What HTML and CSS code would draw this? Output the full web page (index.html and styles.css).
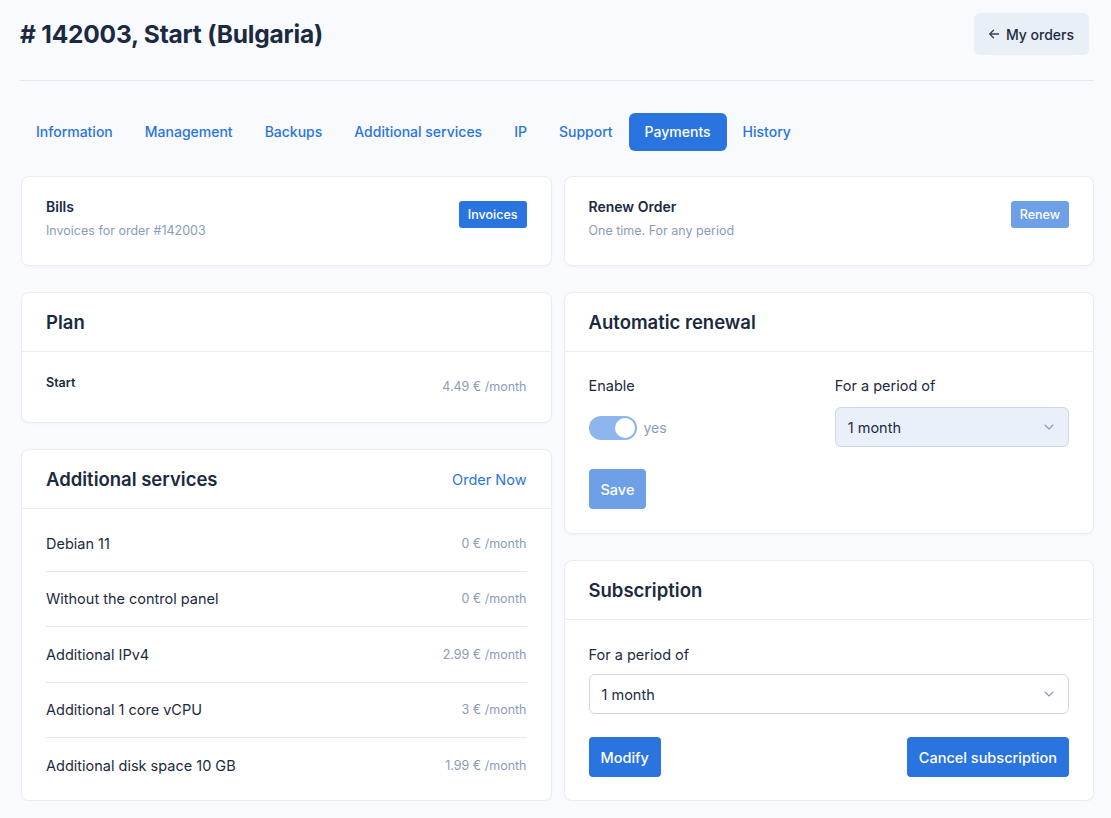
FILE: index.html
```html
<!DOCTYPE html>
<html lang="en">
<head>
<meta charset="utf-8">
<title># 142003, Start (Bulgaria)</title>
<link rel="stylesheet" href="styles.css">
</head>
<body>
<div class="page">
  <header class="header">
    <h1 class="title"># 142003, Start (Bulgaria)</h1>
    <a class="back-btn" href="#">
      <svg class="back-icon" width="12" height="12" viewBox="0 0 12 12" fill="none" stroke="currentColor" stroke-width="1.3" stroke-linecap="round" stroke-linejoin="round"><path d="M10.5 6H1.8M5.5 2.2L1.7 6l3.8 3.8"/></svg>
      <span>My orders</span>
    </a>
  </header>

  <nav class="tabs">
    <a class="tab" href="#">Information</a>
    <a class="tab" href="#">Management</a>
    <a class="tab" href="#">Backups</a>
    <a class="tab" href="#">Additional services</a>
    <a class="tab" href="#">IP</a>
    <a class="tab" href="#">Support</a>
    <a class="tab active" href="#">Payments</a>
    <a class="tab" href="#">History</a>
  </nav>

  <div class="grid">
    <div class="col">
      <section class="card info-card">
        <div class="info-text">
          <div class="info-title">Bills</div>
          <div class="info-sub">Invoices for order #142003</div>
        </div>
        <button class="btn-sm">Invoices</button>
      </section>

      <section class="card">
        <div class="card-head"><h2 class="card-title">Plan</h2></div>
        <div class="plan-body">
          <span class="plan-name">Start</span>
          <span class="price plan-price">4.49 € /month</span>
        </div>
      </section>

      <section class="card">
        <div class="card-head">
          <h2 class="card-title">Additional services</h2>
          <a class="link" href="#">Order Now</a>
        </div>
        <div class="list">
          <div class="row"><span class="row-name">Debian 11</span><span class="price">0 € /month</span></div>
          <div class="row"><span class="row-name">Without the control panel</span><span class="price">0 € /month</span></div>
          <div class="row"><span class="row-name">Additional IPv4</span><span class="price">2.99 € /month</span></div>
          <div class="row"><span class="row-name">Additional 1 core vCPU</span><span class="price">3 € /month</span></div>
          <div class="row"><span class="row-name">Additional disk space 10 GB</span><span class="price">1.99 € /month</span></div>
        </div>
      </section>
    </div>

    <div class="col">
      <section class="card info-card">
        <div class="info-text">
          <div class="info-title">Renew Order</div>
          <div class="info-sub">One time. For any period</div>
        </div>
        <button class="btn-sm disabled">Renew</button>
      </section>

      <section class="card">
        <div class="card-head"><h2 class="card-title">Automatic renewal</h2></div>
        <div class="form-body">
          <div class="form-grid">
            <div class="field">
              <div class="label">Enable</div>
              <div class="control toggle-wrap">
                <span class="toggle"><span class="knob"></span></span>
                <span class="toggle-label">yes</span>
              </div>
            </div>
            <div class="field">
              <div class="label">For a period of</div>
              <div class="select filled">
                <span>1 month</span>
                <svg class="chev" width="10" height="6" viewBox="0 0 10 6" fill="none" stroke="currentColor" stroke-width="1.1" stroke-linecap="round" stroke-linejoin="round"><path d="M1 1l4 4 4-4"/></svg>
              </div>
            </div>
          </div>
          <div class="actions">
            <button class="btn disabled">Save</button>
          </div>
        </div>
      </section>

      <section class="card">
        <div class="card-head"><h2 class="card-title">Subscription</h2></div>
        <div class="form-body sub-body">
          <div class="field">
            <div class="label">For a period of</div>
            <div class="select">
              <span>1 month</span>
              <svg class="chev" width="10" height="6" viewBox="0 0 10 6" fill="none" stroke="currentColor" stroke-width="1.1" stroke-linecap="round" stroke-linejoin="round"><path d="M1 1l4 4 4-4"/></svg>
            </div>
          </div>
          <div class="actions split">
            <button class="btn">Modify</button>
            <button class="btn">Cancel subscription</button>
          </div>
        </div>
      </section>
    </div>
  </div>
</div>
</body>
</html>
```

FILE: styles.css
```css
* { box-sizing: border-box; }

html, body {
  margin: 0;
  background: #f8fafd;
}

body {
  font-family: Inter, "Noto Sans", "Liberation Sans", sans-serif;
  color: #1b2a40;
  font-size: 15px;
}

.page {
  padding: 0 17px 0 20px;
}

.header {
  display: flex;
  justify-content: space-between;
  align-items: center;
  padding: 13px 5px 25px 0;
  border-bottom: 1px solid #e2e9f3;
}

.title {
  margin: 0;
  font-size: 24.5px;
  font-weight: 700;
  letter-spacing: -0.2px;
  line-height: 42px;
  color: #1b2a40;
}

.back-btn {
  display: flex;
  align-items: center;
  gap: 6px;
  height: 42px;
  padding: 0 15px 0 14px;
  background: #e9eff6;
  border-radius: 6px;
  color: #1b2a40;
  text-decoration: none;
  font-size: 14px;
  font-weight: 500;
}

.back-icon { color: #33415a; }

.tabs {
  display: flex;
  gap: 0;
  margin-top: 32px;
}

.tab {
  display: flex;
  align-items: center;
  height: 38px;
  padding: 0 16px 1px;
  border-radius: 6px;
  color: #2a74e0;
  text-decoration: none;
  font-size: 14px;
  font-weight: 500;
}

.tab.active {
  background: #2a74e0;
  color: #fff;
}

.grid {
  display: grid;
  grid-template-columns: 1fr 1fr;
  gap: 12px;
  margin-top: 25px;
  padding-left: 1px;
}

.col {
  display: flex;
  flex-direction: column;
  gap: 26px;
}

.card {
  background: #fff;
  border: 1px solid #e8edf4;
  border-radius: 8px;
  box-shadow: 0 1px 3px rgba(30, 50, 90, 0.03);
}

.info-card {
  display: flex;
  justify-content: space-between;
  align-items: flex-start;
  padding: 20px 24px 24px;
}

.info-title {
  font-size: 14px;
  font-weight: 600;
  line-height: 20px;
}

.info-sub {
  margin-top: 4px;
  font-size: 12.5px;
  line-height: 20px;
  color: #8a9cba;
}

.btn-sm {
  margin-top: 4px;
  height: 27px;
  padding: 0 9px;
  border: 0;
  border-radius: 3px;
  background: #2a74e0;
  color: #fff;
  font-family: inherit;
  font-size: 12.5px;
  font-weight: 500;
}

.btn-sm.disabled { background: #6ea0e8; }

.card-head {
  display: flex;
  justify-content: space-between;
  align-items: center;
  height: 59px;
  padding: 0 24px;
  border-bottom: 1px solid #e8edf4;
}

.card-title {
  margin: 0;
  font-size: 18.5px;
  font-weight: 600;
  line-height: 28px;
  color: #1b2a40;
}

.link {
  color: #2a74e0;
  text-decoration: none;
  font-size: 14.5px;
}

.plan-body {
  display: flex;
  justify-content: space-between;
  align-items: flex-start;
  padding: 21px 24px 25px;
}

.plan-name {
  font-size: 12.5px;
  font-weight: 600;
  line-height: 20px;
}

.plan-price { padding-top: 4px; }

.price {
  font-size: 12.5px;
  line-height: 20px;
  color: #8a9cba;
}

.list {
  padding: 7px 24px;
}

.row {
  display: flex;
  justify-content: space-between;
  align-items: center;
  height: 55.5px;
  border-bottom: 1px solid #e3e9f1;
  padding-top: 1px;
}

.row:last-child { border-bottom: 0; height: 54.5px; }

.row-name {
  font-size: 14.5px;
  line-height: 20px;
}

.form-body {
  padding: 24px 24px 24px;
}

.sub-body {
  padding: 25px 24px 23px;
}

.form-grid {
  display: grid;
  grid-template-columns: 1fr 1fr;
  gap: 12px;
}

.label {
  font-size: 14.5px;
  line-height: 20px;
  margin-bottom: 11px;
}

.sub-body .label { margin-bottom: 9px; }

.control {
  height: 40px;
}

.toggle-wrap {
  display: flex;
  align-items: center;
  gap: 7px;
  padding-top: 1px;
}

.toggle {
  display: flex;
  align-items: center;
  justify-content: flex-end;
  width: 48px;
  height: 24px;
  padding: 2px;
  border-radius: 12px;
  background: #8db6ef;
}

.knob {
  width: 20px;
  height: 20px;
  border-radius: 50%;
  background: #fff;
}

.toggle-label {
  font-size: 14px;
  color: #8a9cba;
}

.select {
  display: flex;
  justify-content: space-between;
  align-items: center;
  height: 40px;
  padding: 0 14px 0 12px;
  border: 1px solid #cbd8ea;
  border-radius: 6px;
  background: #fff;
  font-size: 14.5px;
  color: #1b2a40;
}

.select.filled { background: #e9f0f9; }

.chev { color: #8a9cba; }

.actions {
  display: flex;
  margin-top: 22px;
}

.sub-body .actions { margin-top: 23px; }

.actions.split { justify-content: space-between; }

.btn {
  height: 40px;
  padding: 0 12px;
  border: 0;
  border-radius: 4px;
  background: #2a74e0;
  color: #fff;
  font-family: inherit;
  font-size: 14.5px;
  font-weight: 500;
}

.btn.disabled { background: #6ea0e8; }
```
